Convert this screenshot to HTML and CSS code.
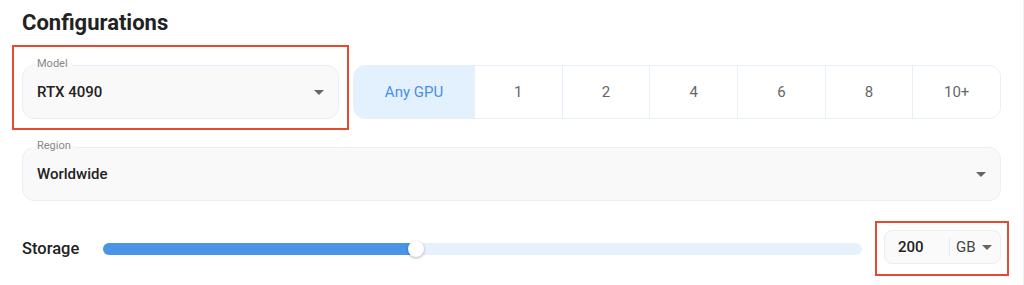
FILE: index.html
```html
<!DOCTYPE html>
<html lang="en">
<head>
  <meta charset="UTF-8" />
  <meta name="viewport" content="width=device-width, initial-scale=1" />
  <title>Configurations</title>
  <link rel="stylesheet" href="styles.css">
</head>
<body>
  <main class="page">
    <h1>Configurations</h1>

    <div class="row">
      <div class="highlight model-box">
        <div class="field">
          <span class="field-label">Model</span>
          <span class="field-value">RTX 4090</span>
          <span class="caret"></span>
        </div>
      </div>

      <div class="gpu-group">
        <button class="gpu active">Any GPU</button>
        <button class="gpu">1</button>
        <button class="gpu">2</button>
        <button class="gpu">4</button>
        <button class="gpu">6</button>
        <button class="gpu">8</button>
        <button class="gpu">10+</button>
      </div>
    </div>

    <div class="field region">
      <span class="field-label">Region</span>
      <span class="field-value">Worldwide</span>
      <span class="caret"></span>
    </div>

    <div class="storage-row">
      <span class="storage-label">Storage</span>
      <div class="slider">
        <div class="slider-fill" style="width: 41.2%"></div>
        <div class="slider-thumb" style="left: 41.2%"></div>
      </div>
      <div class="highlight size-box">
        <div class="size-input">
          <span class="size-value">200</span>
          <span class="size-unit">GB</span>
          <span class="caret"></span>
        </div>
      </div>
    </div>
  </main>
</body>
</html>
```

FILE: styles.css
```css
body {
  margin: 0;
  padding: 0;
  background: #fff;
  color: #222;
  font-family: Roboto, "Noto Sans", Arial, sans-serif;
}
.page {
  width: 1024px;
  height: 285px;
  box-sizing: border-box;
  border-right: 1px solid #eef3f8;
  padding: 0 22px;
}
h1 {
  margin: 0;
  padding-top: 9px;
  font-size: 22px;
  line-height: 28px;
  font-weight: 700;
  color: #222;
}
.row {
  display: flex;
  align-items: flex-start;
  gap: 4px;
  margin-top: 8px;
}
.highlight {
  border: 2px solid #e64a33;
}
.model-box {
  margin-left: -10px;
  padding: 18px 8px 9px 8px;
}
.field {
  position: relative;
  height: 54px;
  box-sizing: border-box;
  border: 1px solid #e6f0fa;
  border-radius: 12px;
  background: #f9f9f9;
  display: flex;
  align-items: center;
  padding: 0 14px;
}
.model-box .field {
  width: 317px;
}
.field-label {
  position: absolute;
  top: -9px;
  left: 10px;
  padding: 0 4px;
  font-size: 11px;
  line-height: 13px;
  color: #888;
  background: linear-gradient(#fff 50%, #f9f9f9 50%);
}
.field-value {
  flex: 1;
  font-size: 15px;
  font-weight: 500;
  color: #222;
  margin-top: -1px;
}
.caret {
  width: 0;
  height: 0;
  border-left: 5px solid transparent;
  border-right: 5px solid transparent;
  border-top: 5px solid #666;
}
.gpu-group {
  flex: 1;
  margin-top: 20px;
  display: flex;
  height: 54px;
  box-sizing: border-box;
  border: 1px solid #e6f0fa;
  border-radius: 12px;
  overflow: hidden;
}
.gpu {
  flex: 1;
  border: none;
  border-left: 1px solid #e6f0fa;
  background: #fff;
  font-family: inherit;
  font-size: 15px;
  color: #666;
  padding: 0;
}
.gpu.active {
  flex: 0 0 120px;
  border-left: none;
  background: #e3f0fd;
  color: #4a90e2;
}
.region {
  margin-top: 17px;
}
.storage-row {
  display: flex;
  align-items: center;
  margin-top: 20px;
}
.storage-label {
  width: 81px;
  font-size: 16.5px;
  font-weight: 500;
  color: #222;
}
.slider {
  position: relative;
  flex: 1;
  height: 12px;
  border-radius: 6px;
  background: #e6f1fc;
  margin-right: 13px;
}
.slider-fill {
  height: 100%;
  border-radius: 6px;
  background: #4a94e8;
}
.slider-thumb {
  position: absolute;
  top: -2px;
  width: 16px;
  height: 16px;
  margin-left: -8px;
  border-radius: 50%;
  background: #fff;
  box-shadow: 0 1px 3px rgba(0, 0, 0, 0.3);
}
.size-box {
  margin-right: -8px;
  padding: 7px 6px 10px 7px;
}
.size-input {
  width: 117px;
  height: 34px;
  box-sizing: border-box;
  border: 1px solid #e6f0fa;
  border-radius: 8px;
  background: #fafafa;
  display: flex;
  align-items: center;
  padding: 0 8px 0 13px;
}
.size-value {
  width: 51px;
  font-size: 15px;
  font-weight: 500;
  color: #222;
  border-right: 1px solid #e2edf9;
  line-height: 18px;
}
.size-unit {
  flex: 1;
  padding-left: 6px;
  font-size: 15px;
  color: #444;
}
```
